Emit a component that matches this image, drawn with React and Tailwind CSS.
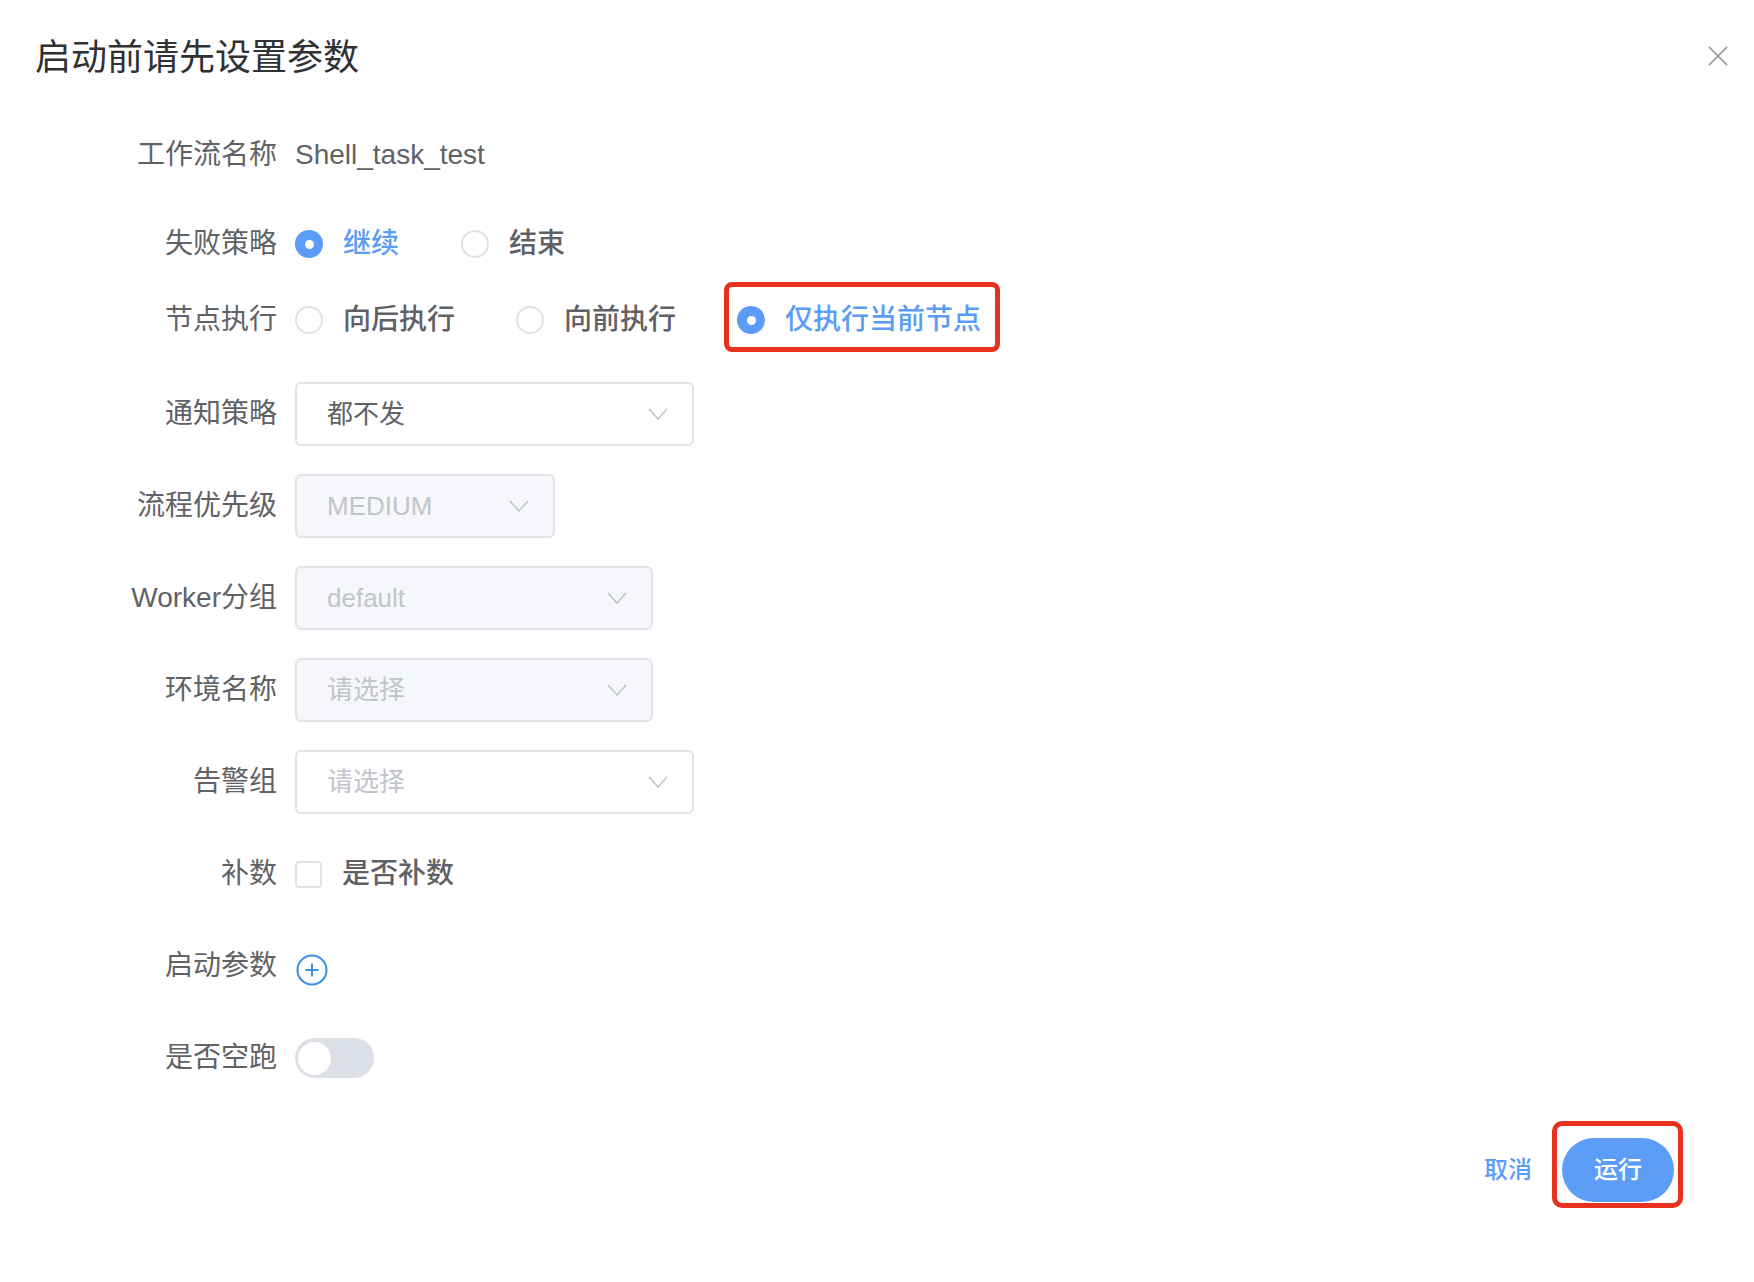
import React from 'react';

const font = { fontFamily: '"Liberation Sans", "Noto Sans CJK SC", sans-serif' };

const Chevron = () => (
  <svg viewBox="0 0 20 12" className="h-[12px] w-[20px]" fill="none" stroke="#c0c4cc" strokeWidth="1.6">
    <path d="M1 1l9 10 9-10" />
  </svg>
);

const Radio = ({ checked, label }) => (
  <div className="flex items-center">
    {checked ? (
      <span className="flex h-[28px] w-[28px] items-center justify-center rounded-full bg-[#5b9cf6]">
        <span className="h-[9px] w-[9px] rounded-full bg-white" />
      </span>
    ) : (
      <span className="h-[28px] w-[28px] rounded-full border-2 border-[#dfe2e8] bg-white" />
    )}
    <span
      className={`ml-[20px] text-[28px] leading-[36px] font-medium ${checked ? 'text-[#5b9cf6]' : 'text-[#5f6166]'}`}
    >
      {label}
    </span>
  </div>
);

const Select = ({ width, value, placeholder, disabled }) => (
  <div
    className={`flex h-[64px] items-center justify-between rounded-[6px] border-2 border-[#e1e4ea] pl-[30px] pr-[24px] ${
      disabled ? 'bg-[#f5f7fa]' : 'bg-white'
    } ${width}`}
  >
    <span
      className={`text-[26px] leading-[32px] ${value && !disabled ? 'text-[#606266]' : 'text-[#c0c4cc]'}`}
    >
      {value || placeholder}
    </span>
    <Chevron />
  </div>
);

const Row = ({ label, className = '', children }) => (
  <div className={`flex h-[64px] items-center ${className}`}>
    <div className="w-[277px] shrink-0 text-right text-[28px] leading-[36px] text-[#606266]">{label}</div>
    <div className="ml-[18px] flex items-center">{children}</div>
  </div>
);

export default function App() {
  return (
    <div className="relative h-[1282px] w-[1754px] bg-white" style={font}>
      <div className="flex items-start justify-between pl-[35px] pr-[26px] pt-[40px]">
        <h1 className="text-[36px] leading-[36px] font-normal text-[#303133]">启动前请先设置参数</h1>
        <svg viewBox="0 0 20 20" className="mt-[6px] h-[20px] w-[20px]" fill="none" stroke="#909399" strokeWidth="1.6">
          <path d="M1 1l18 18M19 1L1 19" />
        </svg>
      </div>

      <div className="flex flex-col">
        <Row label="工作流名称" className="mt-[47px]">
          <span className="text-[28px] leading-[36px] text-[#606266]">Shell_task_test</span>
        </Row>

        <Row label="失败策略" className="mt-[25px]">
          <div className="flex items-center gap-[62px]">
            <Radio checked label="继续" />
            <Radio label="结束" />
          </div>
        </Row>

        <Row label="节点执行" className="mt-[12px]">
          <div className="flex items-center gap-[61px]">
            <Radio label="向后执行" />
            <Radio label="向前执行" />
            <div className="relative">
              <Radio checked label="仅执行当前节点" />
              <div className="pointer-events-none absolute left-[-13px] top-[-20px] h-[70px] w-[276px] rounded-[8px] border-[5px] border-[#e8321f]" />
            </div>
          </div>
        </Row>

        <Row label="通知策略" className="mt-[30px]">
          <Select width="w-[399px]" value="都不发" />
        </Row>

        <Row label="流程优先级" className="mt-[28px]">
          <Select width="w-[260px]" value="MEDIUM" disabled />
        </Row>

        <Row label="Worker分组" className="mt-[28px]">
          <Select width="w-[358px]" value="default" disabled />
        </Row>

        <Row label="环境名称" className="mt-[28px]">
          <Select width="w-[358px]" placeholder="请选择" disabled />
        </Row>

        <Row label="告警组" className="mt-[28px]">
          <Select width="w-[399px]" placeholder="请选择" />
        </Row>

        <Row label="补数" className="mt-[28px]">
          <span className="h-[27px] w-[27px] rounded-[4px] border-2 border-[#dfe2e8] bg-white" />
          <span className="ml-[20px] text-[28px] leading-[36px] font-medium text-[#5f6166]">是否补数</span>
        </Row>

        <Row label="启动参数" className="mt-[28px]">
          <svg viewBox="0 0 32 32" className="ml-[1px] mt-[8px] h-[32px] w-[32px]" fill="none" stroke="#3d8fe0" strokeWidth="2">
            <circle cx="16" cy="16" r="14.5" />
            <path d="M16 9.5v13M9.5 16h13" />
          </svg>
        </Row>

        <Row label="是否空跑" className="mt-[28px]">
          <div className="flex h-[40px] w-[79px] items-center rounded-full bg-[#dcdfe6] px-[3px]">
            <span className="h-[33px] w-[33px] rounded-full bg-white" />
          </div>
        </Row>
      </div>

      <div className="mt-[48px] flex items-center justify-end pr-[80px]">
        <button className="mr-[-2px] text-[24px] leading-[30px] font-medium text-[#5b9cf6]">取消</button>
        <div className="relative ml-[32px]">
          <button className="h-[64px] w-[112px] rounded-full bg-[#5b9df7] text-[24px] leading-[30px] font-medium text-white">
            运行
          </button>
          <div className="pointer-events-none absolute left-[-10px] top-[-17px] h-[87px] w-[131px] rounded-[10px] border-[5px] border-[#e8321f]" />
        </div>
      </div>
    </div>
  );
}
